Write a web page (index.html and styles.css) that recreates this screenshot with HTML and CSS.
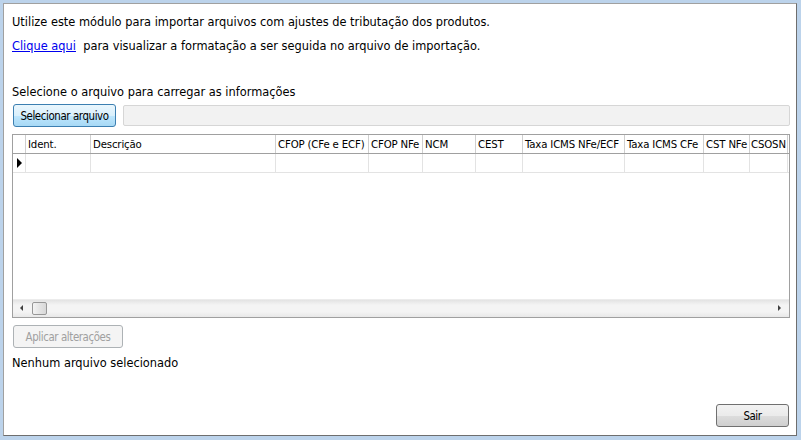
FILE: index.html
```html
<!DOCTYPE html>
<html lang="pt">
<head>
<meta charset="utf-8">
<title>Importar tributação</title>
<link rel="stylesheet" href="styles.css">
</head>
<body>
<div class="panel">
  <p class="line l1">Utilize este módulo para importar arquivos com ajustes de tributação dos produtos.</p>
  <p class="line l2"><a class="link" href="#">Clique aqui</a>&nbsp; para visualizar a formatação a ser seguida no arquivo de importação.</p>
  <p class="line l3">Selecione o arquivo para carregar as informações</p>
  <div class="filerow">
    <button class="btn btn-focus">Selecionar arquivo</button>
    <div class="filebox"></div>
  </div>
  <div class="grid">
    <div class="gridrow header">
      <div class="cell sel"></div>
      <div class="cell c1">Ident.</div>
      <div class="cell c2">Descrição</div>
      <div class="cell c3">CFOP (CFe e ECF)</div>
      <div class="cell c4">CFOP NFe</div>
      <div class="cell c5">NCM</div>
      <div class="cell c6">CEST</div>
      <div class="cell c7">Taxa ICMS NFe/ECF</div>
      <div class="cell c8">Taxa ICMS CFe</div>
      <div class="cell c9">CST NFe</div>
      <div class="cell c10">CSOSN</div>
    </div>
    <div class="gridrow datarow">
      <div class="cell sel"><span class="pointer"></span></div>
      <div class="cell c1"></div>
      <div class="cell c2"></div>
      <div class="cell c3"></div>
      <div class="cell c4"></div>
      <div class="cell c5"></div>
      <div class="cell c6"></div>
      <div class="cell c7"></div>
      <div class="cell c8"></div>
      <div class="cell c9"></div>
      <div class="cell c10"></div>
    </div>
    <div class="gridbody"></div>
    <div class="hscroll">
      <div class="arrow arrow-left"></div>
      <div class="thumb"></div>
      <div class="track"></div>
      <div class="arrow arrow-right"></div>
    </div>
  </div>
  <div class="applyrow">
    <button class="btn btn-disabled">Aplicar alterações</button>
  </div>
  <p class="line status">Nenhum arquivo selecionado</p>
  <div class="footer">
    <button class="btn btn-exit">Sair</button>
  </div>
</div>
</body>
</html>
```
FILE: styles.css
```css
html, body {
  margin: 0;
  padding: 0;
}
body {
  width: 801px;
  height: 440px;
  background: #bcd3eb;
  font-family: "DejaVu Sans", Verdana, sans-serif;
  font-size: 11.4px;
  color: #000;
  overflow: hidden;
}
.panel {
  box-sizing: border-box;
  margin: 3px 0 0 3px;
  width: 794px;
  height: 433px;
  background: #fff;
  border: 1px solid;
  border-color: #a0a0a0 #6e6e6e #6e6e6e #a0a0a0;
  padding: 0 6px 0 8px;
  display: flex;
  flex-direction: column;
}
.line {
  margin: 0;
  height: 14px;
  line-height: 14px;
  white-space: nowrap;
}
.l1 { margin-top: 11px; }
.l2 { margin-top: 10px; }
.l3 { margin-top: 32px; }
.link {
  color: #0000ee;
  text-decoration: underline;
}
.filerow {
  display: flex;
  gap: 7px;
  margin-top: 5px;
  height: 23px;
  padding-left: 1px;
}
.btn {
  box-sizing: border-box;
  height: 23px;
  font-family: "DejaVu Sans Condensed", "DejaVu Sans", sans-serif;
  font-size: 11.4px;
  letter-spacing: -0.4px;
  white-space: nowrap;
  border: 1px solid #707070;
  border-radius: 3px;
  background: linear-gradient(#f2f2f2 0%, #ebebeb 50%, #dddddd 51%, #cfcfcf 100%);
  padding: 0;
  color: #000;
}
.btn-focus {
  width: 103px;
  border-color: #3c7fb1;
  background: linear-gradient(#eaf6fd 0%, #d9f0fc 50%, #bee6fd 51%, #a7d9f5 100%);
}
.filebox {
  box-sizing: border-box;
  flex: 1;
  height: 21px;
  margin-top: 1px;
  background: #f2f2f2;
  border: 1px solid #d6d6d6;
  border-radius: 2px;
}
.grid {
  box-sizing: border-box;
  margin-top: 7px;
  width: 778px;
  height: 184px;
  border: 1px solid #a0a0a0;
  display: flex;
  flex-direction: column;
  background: #fff;
}
.gridrow {
  display: flex;
  height: 18px;
  flex: none;
}
.header {
  border-bottom: 1px solid #a0a0a0;
}
.header .cell {
  font-family: "DejaVu Sans Condensed", "DejaVu Sans", sans-serif;
  font-size: 11.3px;
  letter-spacing: -0.15px;
  line-height: 20px;
  border-right-color: #cfcfcf;
}
.datarow {
  border-bottom: 1px solid #e3e3e3;
}
.cell {
  box-sizing: border-box;
  height: 100%;
  line-height: 18px;
  padding-left: 2px;
  white-space: nowrap;
  overflow: hidden;
  border-right: 1px solid #e3e3e3;
}
.sel { width: 13px; padding: 0; position: relative; }
.c1 { width: 65px; }
.c2 { width: 185px; }
.c3 { width: 93px; }
.c4 { width: 54px; }
.c5 { width: 53px; }
.c6 { width: 47px; }
.c7 { width: 102px; }
.c8 { width: 79px; }
.c9 { width: 46px; }
.header .c10, .c10 { width: 38px; padding-left: 1px; }
.pointer {
  position: absolute;
  left: 4px;
  top: 4px;
  width: 0;
  height: 0;
  border-top: 5px solid transparent;
  border-bottom: 5px solid transparent;
  border-left: 5px solid #000;
}
.gridbody {
  flex: 1;
}
.hscroll {
  display: flex;
  align-items: center;
  height: 17px;
  flex: none;
  background: linear-gradient(#e3e3e3, #f4f4f4 30%, #f4f4f4 70%, #e8e8e8);
  border-top: 1px solid #ececec;
}
.arrow {
  width: 17px;
  height: 17px;
  position: relative;
}
.arrow-left::after, .arrow-right::after {
  content: "";
  position: absolute;
  top: 5px;
  width: 0;
  height: 0;
  border-top: 3px solid transparent;
  border-bottom: 3px solid transparent;
}
.arrow-left::after {
  left: 7px;
  border-right: 3px solid #404040;
}
.arrow-right::after {
  left: 6px;
  border-left: 3px solid #404040;
}
.thumb {
  box-sizing: border-box;
  width: 15px;
  height: 13px;
  margin-left: 2px;
  border: 1px solid #979797;
  border-radius: 2px;
  background: linear-gradient(90deg, #f3f3f3, #e4e4e4 50%, #d8d8d8);
}
.track { flex: 1; }
.applyrow {
  margin-top: 7px;
  padding-left: 1px;
  height: 23px;
}
.btn-disabled {
  width: 110px;
  color: #a0a0a0;
  border-color: #adb2b5;
  background: #f4f4f4;
}
.status { margin-top: 8px; }
.footer {
  margin-top: auto;
  margin-bottom: 8px;
  display: flex;
  justify-content: flex-end;
  padding-right: 1px;
}
.btn-exit { width: 73px; }
```
